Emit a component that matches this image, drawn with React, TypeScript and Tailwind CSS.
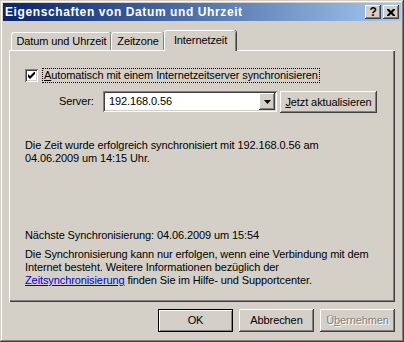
import React from "react";

const raised =
  "shadow-[inset_-1px_-1px_#404040,inset_1px_1px_#ffffff,inset_-2px_-2px_#808080]";
const sunken =
  "shadow-[inset_1px_1px_#808080,inset_-1px_-1px_#ffffff,inset_2px_2px_#404040,inset_-2px_-2px_#d4d0c8]";

const Tab = ({
  label,
  width,
  active,
}: {
  label: string;
  width: string;
  active?: boolean;
}) => (
  <div
    className={
      "relative flex items-center justify-center rounded-t-[3px] bg-[#d4d0c8] border-t border-l border-white shadow-[inset_-1px_0_#808080,1px_0_#404040] " +
      width +
      (active ? " h-[21px] -mb-[1px] z-10 pb-[2px]" : " h-[18px]")
    }
  >
    {label}
  </div>
);

const Button = ({
  children,
  isDefault,
  disabled,
}: {
  children: React.ReactNode;
  isDefault?: boolean;
  disabled?: boolean;
}) => (
  <div
    className={
      "flex items-center justify-center w-[75px] h-[23px] bg-[#d4d0c8] " +
      (isDefault
        ? "shadow-[inset_0_0_0_1px_#000000,inset_2px_2px_#ffffff,inset_-2px_-2px_#808080]"
        : raised) +
      (disabled ? " text-[#808080] [text-shadow:1px_1px_#ffffff]" : "")
    }
  >
    {children}
  </div>
);

export default function App() {
  return (
    <div
      className={
        "w-[404px] h-[342px] bg-[#d4d0c8] p-[3px] text-[11px] leading-[13px] tracking-[-0.1px] text-black font-['Liberation_Sans',sans-serif] shadow-[inset_-1px_-1px_#404040,inset_1px_1px_#d4d0c8,inset_-2px_-2px_#808080,inset_2px_2px_#ffffff]"
      }
    >
      {/* Title bar */}
      <div className="flex items-center h-[18px] bg-linear-to-r from-[#0a246a] to-[#a6caf0] pl-[2px] pr-[2px]">
        <span className="font-bold text-white text-[12px] tracking-[0.6px] grow">
          Eigenschaften von Datum und Uhrzeit
        </span>
        <div className="flex gap-[2px]">
          <div
            className={
              "w-[16px] h-[14px] bg-[#d4d0c8] flex items-center justify-center font-bold text-[12px] " +
              raised
            }
          >
            ?
          </div>
          <div
            className={
              "w-[16px] h-[14px] bg-[#d4d0c8] flex items-center justify-center " +
              raised
            }
          >
            <svg width="8" height="7" viewBox="0 0 8 7">
              <path
                d="M0 0h2l2 2 2-2h2v1l-2.5 2.5L8 6v1H6L4 5 2 7H0V6l2.5-2.5L0 1z"
                fill="#000"
              />
            </svg>
          </div>
        </div>
      </div>

      {/* Tabs */}
      <div className="flex items-end mt-[9px] ml-[8px]">
        <Tab label="Datum und Uhrzeit" width="w-[100px]" />
        <Tab label="Zeitzone" width="w-[53px]" />
        <Tab label="Internetzeit" width="w-[72px]" active />
      </div>

      {/* Panel */}
      <div className="mx-[6px] h-[252px] border-t border-l border-white shadow-[inset_-1px_-1px_#404040,inset_-2px_-2px_#808080] pt-[17px]">
        <div className="flex items-center ml-[15px] h-[14px]">
          <div
            className={
              "w-[13px] h-[13px] bg-white flex items-center justify-center " +
              sunken
            }
          >
            <svg width="7" height="7" viewBox="0 0 7 7">
              <path d="M0 2v3l2 2 5-5V-1L2 4z" fill="#000" />
            </svg>
          </div>
          <div className="ml-[4px] h-[15px] flex items-center px-[1px] border border-dotted border-black">
            <span>
              <span className="underline">A</span>utomatisch mit einem
              Internetzeitserver synchronisieren
            </span>
          </div>
        </div>

        <div className="flex items-start mt-[9px] ml-[49px]">
          <div className="w-[44px] h-[21px] flex items-center">Server:</div>
          <div
            className={
              "w-[174px] h-[21px] bg-white flex items-center p-[2px] " + sunken
            }
          >
            <span className="grow pl-[4px]">192.168.0.56</span>
            <div
              className={
                "w-[16px] h-[17px] bg-[#d4d0c8] flex items-center justify-center " +
                raised
              }
            >
              <svg width="7" height="4" viewBox="0 0 7 4">
                <path d="M0 0h7L3.5 4z" fill="#000" />
              </svg>
            </div>
          </div>
          <div
            className={
              "ml-[3px] w-[97px] h-[22px] bg-[#d4d0c8] flex items-center justify-center " +
              raised
            }
          >
            <span>
              <span className="underline">J</span>etzt aktualisieren
            </span>
          </div>
        </div>

        <div className="mt-[26px] ml-[15px] whitespace-nowrap">
          Die Zeit wurde erfolgreich synchronisiert mit 192.168.0.56 am
          <br />
          04.06.2009 um 14:15 Uhr.
        </div>

        <div className="mt-[64px] ml-[15px] whitespace-nowrap">
          Nächste Synchronisierung: 04.06.2009 um 15:54
        </div>

        <div className="mt-[6px] ml-[15px] whitespace-nowrap">
          Die Synchronisierung kann nur erfolgen, wenn eine Verbindung mit dem
          <br />
          Internet besteht. Weitere Informationen bezüglich der
          <br />
          <span className="text-[#0000cc] underline">Zeitsynchronisierung</span>{" "}
          finden Sie im Hilfe- und Supportcenter.
        </div>
      </div>

      {/* Dialog buttons */}
      <div className="flex justify-end gap-[6px] mt-[7px] mr-[6px]">
        <Button isDefault>OK</Button>
        <Button>Abbrechen</Button>
        <Button disabled>
          <span>
            Ü<span className="underline">b</span>ernehmen
          </span>
        </Button>
      </div>
    </div>
  );
}
